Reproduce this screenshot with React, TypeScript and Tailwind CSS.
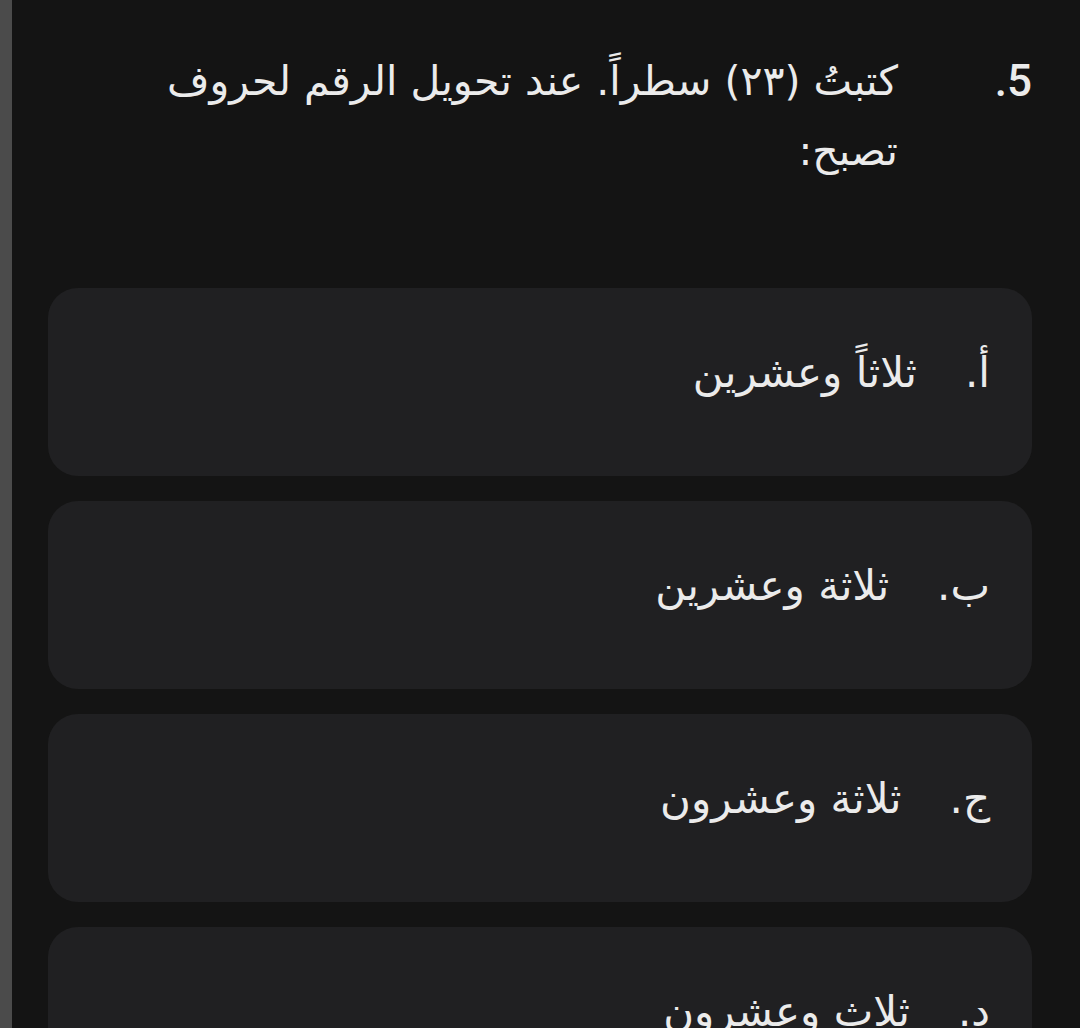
const options = [
  { label: "أ.", text: "ثلاثاً وعشرين" },
  { label: "ب.", text: "ثلاثة وعشرين" },
  { label: "ج.", text: "ثلاثة وعشرون" },
  { label: "د.", text: "ثلاث وعشرون" },
];

export default function App() {
  return (
    <div className="flex h-[1028px] w-full overflow-hidden bg-[#141414]">
      <div className="w-3 shrink-0 bg-[#4b4b4b]" />
      <div
        dir="rtl"
        className="flex flex-1 flex-col pl-9 pr-12 pt-[46px] text-[#ebebeb]"
        style={{ fontFamily: '"DejaVu Sans", sans-serif' }}
      >
        <div className="flex items-start">
          <div
            dir="ltr"
            className="w-[134px] shrink-0 text-right text-[44px] font-medium leading-[70px]"
            style={{ fontFamily: "Roboto, sans-serif" }}
          >
            .5
          </div>
          <p className="w-[750px] text-[41px] leading-[70px]">
            كتبتُ (٢٣) سطراً. عند تحويل الرقم لحروف تصبح:
          </p>
        </div>

        <div className="mt-[102px] flex flex-col gap-[25px]">
          {options.map((o) => (
            <div
              key={o.label}
              className="flex h-[188px] shrink-0 items-center gap-12 rounded-[30px] bg-[#202022] pb-5 pr-[42px] text-[42px]"
            >
              <span>{o.label}</span>
              <span>{o.text}</span>
            </div>
          ))}
        </div>
      </div>
    </div>
  );
}
